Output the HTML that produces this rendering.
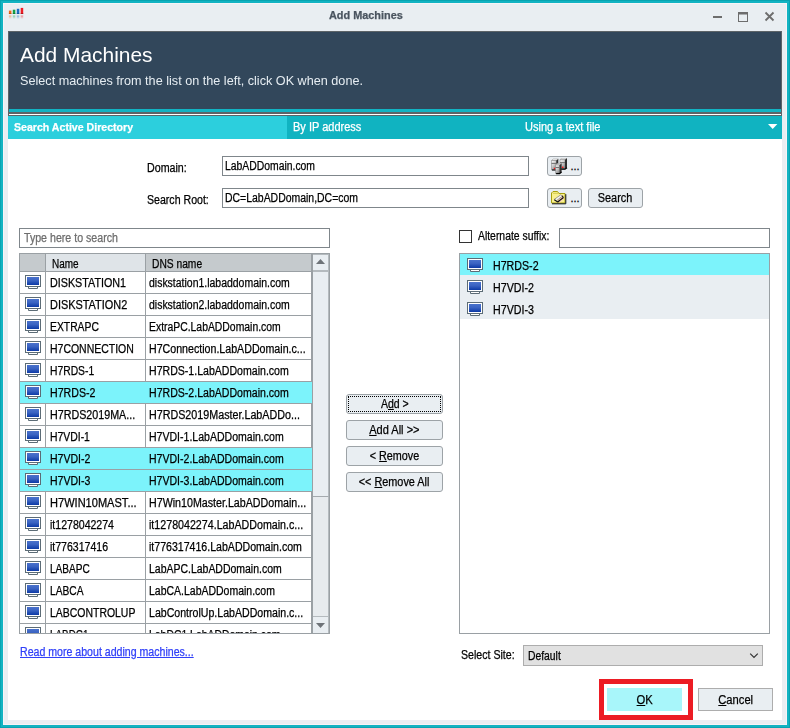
<!DOCTYPE html>
<html><head><meta charset="utf-8"><title>Add Machines</title>
<style>
*{box-sizing:border-box;margin:0;padding:0}
html,body{width:790px;height:728px;overflow:hidden;background:#e9eef2}
body{font-family:"Liberation Sans",Arial,sans-serif;font-size:11px;color:#000;position:relative;-webkit-text-stroke:0.250px}
.abs{position:absolute}
#frame{position:absolute;left:0;top:0;width:790px;height:728px;border:3px solid #12b3c2;background:#e9eef2;box-shadow:inset 0 0 0 1px #f6f4f7;outline:1px solid #07a4b1;outline-offset:-1px}
#titletxt{position:absolute;left:329px;top:9px;white-space:nowrap;color:#4a545f}
#dark{position:absolute;left:8px;top:31px;width:774px;height:78px;background:#32475b;border-left:1px solid #5d6468;border-top:1px solid #5d6468;border-right:1px solid #5d6468}
#h1{-webkit-text-stroke:0;position:absolute;left:20px;top:43px;color:#fff;white-space:nowrap}
#h2{-webkit-text-stroke:0;position:absolute;left:20px;top:73px;color:#e6edf2;white-space:nowrap}
#stripe{position:absolute;left:8px;top:109px;width:774px;height:3px;background:#12b3c3;border-left:1px solid #5d6468;border-right:1px solid #5d6468}
#sep{position:absolute;left:8px;top:112px;width:774px;height:4px;background:#fff;border:1px solid #5d6468;border-top-width:2px}
#tabs{position:absolute;left:8px;top:116px;width:774px;height:23px;background:#10b3c1}
#tab1{position:absolute;left:0;top:0;width:278.600px;height:23px;background:#2ccfdd}
.tabtxt{position:absolute;top:4px;color:#fff;font-size:12px;white-space:nowrap}
#body{position:absolute;left:8px;top:139px;width:774px;height:581px;background:#fff}
.lbl{position:absolute;white-space:nowrap}
.inp{position:absolute;border:1px solid #7f868b;background:#fff;height:20px;padding:2px 0 0 2.400px;white-space:nowrap;overflow:hidden}
.btn{position:absolute;border:1px solid #9da3a7;border-radius:3px;background:#e9eef2;text-align:center;white-space:nowrap}
.sbtn{position:absolute;border:1px solid #adadad;background:#e9eef2;text-align:center;white-space:nowrap}
u{text-decoration:underline}
#grid{position:absolute;left:19px;top:253px;width:311px;height:381px;border:1px solid #9aa0a4;background:#fff;overflow:hidden}
.hdr{position:absolute;top:0;height:18px;border-right:1px solid #9aa0a4;border-bottom:1px solid #9aa0a4;padding:3px 0 0 6px;white-space:nowrap;background:#c5cacd}
.row{position:absolute;left:0;width:292px;height:22px;border-bottom:1px solid #9aa0a4;background:#fff}
.row.sel{background:#7cf3fb}
.row div{position:absolute;top:0;height:21px;white-space:nowrap;overflow:hidden;padding-top:4px}
.c0{left:0;width:26px;border-right:1px solid #9aa0a4}
.c1{left:26px;width:100px;border-right:1px solid #9aa0a4;padding-left:3.6px}
.c2{left:126px;width:166px;border-right:1px solid #9aa0a4;padding-left:3.1px}
.row.sel div{border-right-color:#7cf3fb}
.mon{position:absolute;left:5px;top:3px;display:block}
#sb{position:absolute;left:292px;top:0;width:17px;height:379px;background:#e7ebee;border-left:1px solid #9aa0a4}
#list{position:absolute;left:459px;top:253px;width:311px;height:381px;border:1px solid #9aa0a4;background:#fff;overflow:hidden}
.li{position:absolute;left:0;width:309px;height:22px;background:#e9eef2;white-space:nowrap}
.li span{position:absolute;left:33px;top:6px}
.li .mon{left:7px;top:5px}
</style></head><body>
<svg width="0" height="0" style="position:absolute"><defs><linearGradient id="mg" x1="0" y1="0" x2="0" y2="1"><stop offset="0" stop-color="#4a72cc"/><stop offset="0.450" stop-color="#3a63c2"/><stop offset="1" stop-color="#0d3aa6"/></linearGradient></defs></svg>
<div id="frame"></div>
<svg class="abs" style="left:0;top:0" width="32" height="24" viewBox="0 0 32 24"><defs><linearGradient id="rf" x1="0" y1="0" x2="0" y2="1"><stop offset="0" stop-color="#fff" stop-opacity="0.500"/><stop offset="1" stop-color="#fff" stop-opacity="0"/></linearGradient><mask id="rm"><rect x="8" y="15.300" width="16" height="3.700" fill="url(#rf)"/></mask></defs><rect x="8.9" y="10.6" width="2.500" height="3.3" fill="#f2651a"/><rect x="8.9" y="13.100" width="2.500" height="0.800" fill="#b84a08"/><rect x="12.8" y="9.7" width="2.500" height="4.2" fill="#16a046"/><rect x="12.8" y="13.100" width="2.500" height="0.800" fill="#0a7a2c"/><rect x="16.8" y="8.8" width="2.500" height="5.1" fill="#1c6fc4"/><rect x="16.8" y="13.100" width="2.500" height="0.800" fill="#0c4f96"/><rect x="20.7" y="7.9" width="2.500" height="6.0" fill="#ec1c24"/><rect x="20.7" y="13.100" width="2.500" height="0.800" fill="#a80a12"/><g mask="url(#rm)"><rect x="8.9" y="15.300" width="2.500" height="3.700" fill="#f2651a"/><rect x="12.8" y="15.300" width="2.500" height="3.700" fill="#16a046"/><rect x="16.8" y="15.300" width="2.500" height="3.700" fill="#1c6fc4"/><rect x="20.7" y="15.300" width="2.500" height="3.700" fill="#ec1c24"/></g></svg>
<div id="titletxt"><span style="display:inline-block;transform:scaleX(1.0367);transform-origin:0 50%;font-size:10.5px;font-weight:bold">Add Machines</span></div>
<svg class="abs" style="left:708px;top:8px" width="72" height="18" viewBox="0 0 72 18">
<rect x="5" y="8" width="9" height="2" fill="#6d6d6d"/>
<rect x="30.500" y="5.500" width="9" height="8" fill="none" stroke="#6d6d6d"/><rect x="30" y="4" width="10" height="2.500" fill="#6d6d6d"/>
<path d="M57.500 4.500l8 8M65.500 4.500l-8 8" stroke="#6d6d6d" stroke-width="1.800" fill="none"/>
</svg>
<div id="dark"></div>
<div id="h1"><span style="display:inline-block;transform:scaleX(0.9957);transform-origin:0 50%;font-size:21px">Add Machines</span></div>
<div id="h2"><span style="display:inline-block;transform:scaleX(0.9727);transform-origin:0 50%;font-size:13px">Select machines from the list on the left, click OK when done.</span></div>
<div id="stripe"></div><div id="sep"></div>
<div id="tabs"><div id="tab1"></div>
<div class="tabtxt" style="left:5.500px"><span style="display:inline-block;transform:scaleX(0.9208);transform-origin:0 50%;font-size:11.5px;font-weight:bold">Search Active Directory</span></div>
<div class="tabtxt" style="left:285px"><span style="display:inline-block;transform:scaleX(0.9170);transform-origin:0 50%;font-size:12px">By IP address</span></div>
<div class="tabtxt" style="left:516.600px"><span style="display:inline-block;transform:scaleX(0.9202);transform-origin:0 50%;font-size:12px">Using a text file</span></div>
<svg class="abs" style="left:760px;top:8px" width="10" height="5" viewBox="0 0 10 5"><path d="M0 0h9.400l-4.700 5z" fill="#fff"/></svg>
</div>
<div id="body"></div>

<div class="lbl" style="left:146.500px;top:161px"><span style="display:inline-block;transform:scaleX(0.8884);transform-origin:0 50%;font-size:12px">Domain:</span></div>
<div class="inp" style="left:222px;top:156px;width:307px"><span style="display:inline-block;transform:scaleX(0.8650);transform-origin:0 50%;font-size:12px">LabADDomain.com</span></div>
<div class="btn" style="left:547px;top:156px;width:35px;height:20px"><span class="abs" style="left:22.500px;top:3px;font-size:11px">...</span>
<svg class="abs" style="left:3px;top:1px" width="17" height="17" viewBox="0 0 17 17"><defs><linearGradient id="sg" x1="0" y1="0" x2="0.600" y2="1"><stop offset="0" stop-color="#ffffff"/><stop offset="0.500" stop-color="#d0d0d0"/><stop offset="1" stop-color="#8c8c8c"/></linearGradient></defs><path d="M0.5 2.5L2.0 1H7.3L5.3 2.5z" fill="#fafafa" stroke="#8c8c8c" stroke-width="0.500"/><path d="M0.5 2.5H5.3V12H0.5z" fill="url(#sg)" stroke="#7a7a7a" stroke-width="0.500"/><path d="M5.3 2.5L7.3 1V10.5L5.3 12z" fill="#2e2e2e"/><path d="M0.5 5.4H5.3" stroke="#6f6f6f" stroke-width="1"/><path d="M1.0 12H5.3L7.3 10.5" stroke="#000" stroke-width="1.200" fill="none"/><path d="M9 1.7L10.5 0.2H16L14.0 1.7z" fill="#fafafa" stroke="#8c8c8c" stroke-width="0.500"/><path d="M9 1.7H14.0V11.2H9z" fill="url(#sg)" stroke="#7a7a7a" stroke-width="0.500"/><path d="M14.0 1.7L16 0.2V9.7L14.0 11.2z" fill="#2e2e2e"/><path d="M9 4.6000000000000005H14.0" stroke="#6f6f6f" stroke-width="1"/><path d="M9.5 11.2H14.0L16 9.7" stroke="#000" stroke-width="1.200" fill="none"/><rect x="2.900" y="9.800" width="1.400" height="1.400" fill="#ff1010"/><rect x="11" y="8.600" width="1.400" height="1.400" fill="#ff1010"/><path d="M4.6 6.9L6.1 5.4H10.6L8.6 6.9z" fill="#fafafa" stroke="#8c8c8c" stroke-width="0.500"/><path d="M4.6 6.9H8.6V15.6H4.6z" fill="url(#sg)" stroke="#7a7a7a" stroke-width="0.500"/><path d="M8.6 6.9L10.6 5.4V14.1L8.6 15.6z" fill="#2e2e2e"/><path d="M4.6 9.48H8.6" stroke="#6f6f6f" stroke-width="1"/><path d="M5.1 15.6H8.6L10.6 14.1" stroke="#000" stroke-width="1.200" fill="none"/></svg></div>
<div class="lbl" style="left:146.500px;top:193px"><span style="display:inline-block;transform:scaleX(0.8823);transform-origin:0 50%;font-size:12px">Search Root:</span></div>
<div class="inp" style="left:222px;top:188px;width:307px"><span style="display:inline-block;transform:scaleX(0.8708);transform-origin:0 50%;font-size:12px">DC=LabADDomain,DC=com</span></div>
<div class="btn" style="left:547px;top:188px;width:35px;height:20px"><span class="abs" style="left:22.500px;top:3px;font-size:11px">...</span>
<svg class="abs" style="left:3px;top:2px" width="17" height="15" viewBox="0 0 17 15"><path d="M0.500 12V2l1.500-1.500h4.500L8 2.500H14V12z" fill="#f9f08f" stroke="#a6a010"/><path d="M2 2.300H7.500" stroke="#c9c23a" stroke-width="0.800"/><path d="M1 12.800H14.800V3.200" stroke="#111" stroke-width="1" fill="none"/><path d="M9.500 4.200l2.300 0.300 1.200 3-4 4-2.500-1z" fill="#f8cdb4"/><path d="M3.500 8.200L9.800 3.800l1.500 1.400L5.300 9.800z" fill="#f4f4f4" stroke="#666" stroke-width="0.600"/><path d="M3.300 8.800l3.200 2.200 1.700-0.600M6.500 11L12.200 6.800l-0.800-2" stroke="#111" stroke-width="1.100" fill="none"/></svg></div>
<div class="btn" style="left:588px;top:188px;width:55px;height:20px;padding-top:2px"><span style="display:inline-block;transform:scaleX(0.9045);transform-origin:50% 50%;font-size:12px">Search</span></div>

<div class="inp" style="left:19px;top:228px;width:311px;color:#6d6d6d;padding-left:4.200px"><span style="display:inline-block;transform:scaleX(0.8853);transform-origin:0 50%;font-size:12px">Type here to search</span></div>
<div id="grid">
<div class="hdr" style="left:0;width:26px"></div>
<div class="hdr" style="left:26px;width:100px;background:#dfe4e8"><span style="display:inline-block;transform:scaleX(0.8308);transform-origin:0 50%;font-size:12px">Name</span></div>
<div class="hdr" style="left:126px;width:166px"><span style="display:inline-block;transform:scaleX(0.8537);transform-origin:0 50%;font-size:12px">DNS name</span></div>
<div class="row" style="top:18px"><div class="c0"><svg class="mon" width="16" height="14" viewBox="0 0 16 14"><rect x="0.5" y="0.5" width="15" height="11" fill="#fff" stroke="#5c6c76"/><rect x="2" y="2" width="12" height="8" fill="url(#mg)"/><path d="M3.500 12v1.500h9V12" fill="#fff" stroke="#5c6c76"/></svg></div><div class="c1"><span style="display:inline-block;transform:scaleX(0.8963);transform-origin:0 50%;font-size:12px">DISKSTATION1</span></div><div class="c2"><span style="display:inline-block;transform:scaleX(0.8722);transform-origin:0 50%;font-size:12px">diskstation1.labaddomain.com</span></div></div>
<div class="row" style="top:40px"><div class="c0"><svg class="mon" width="16" height="14" viewBox="0 0 16 14"><rect x="0.5" y="0.5" width="15" height="11" fill="#fff" stroke="#5c6c76"/><rect x="2" y="2" width="12" height="8" fill="url(#mg)"/><path d="M3.500 12v1.500h9V12" fill="#fff" stroke="#5c6c76"/></svg></div><div class="c1"><span style="display:inline-block;transform:scaleX(0.9092);transform-origin:0 50%;font-size:12px">DISKSTATION2</span></div><div class="c2"><span style="display:inline-block;transform:scaleX(0.8722);transform-origin:0 50%;font-size:12px">diskstation2.labaddomain.com</span></div></div>
<div class="row" style="top:62px"><div class="c0"><svg class="mon" width="16" height="14" viewBox="0 0 16 14"><rect x="0.5" y="0.5" width="15" height="11" fill="#fff" stroke="#5c6c76"/><rect x="2" y="2" width="12" height="8" fill="url(#mg)"/><path d="M3.500 12v1.500h9V12" fill="#fff" stroke="#5c6c76"/></svg></div><div class="c1"><span style="display:inline-block;transform:scaleX(0.8626);transform-origin:0 50%;font-size:12px">EXTRAPC</span></div><div class="c2"><span style="display:inline-block;transform:scaleX(0.8661);transform-origin:0 50%;font-size:12px">ExtraPC.LabADDomain.com</span></div></div>
<div class="row" style="top:84px"><div class="c0"><svg class="mon" width="16" height="14" viewBox="0 0 16 14"><rect x="0.5" y="0.5" width="15" height="11" fill="#fff" stroke="#5c6c76"/><rect x="2" y="2" width="12" height="8" fill="url(#mg)"/><path d="M3.500 12v1.500h9V12" fill="#fff" stroke="#5c6c76"/></svg></div><div class="c1"><span style="display:inline-block;transform:scaleX(0.8728);transform-origin:0 50%;font-size:12px">H7CONNECTION</span></div><div class="c2"><span style="display:inline-block;transform:scaleX(0.8865);transform-origin:0 50%;font-size:12px">H7Connection.LabADDomain.c...</span></div></div>
<div class="row" style="top:106px"><div class="c0"><svg class="mon" width="16" height="14" viewBox="0 0 16 14"><rect x="0.5" y="0.5" width="15" height="11" fill="#fff" stroke="#5c6c76"/><rect x="2" y="2" width="12" height="8" fill="url(#mg)"/><path d="M3.500 12v1.500h9V12" fill="#fff" stroke="#5c6c76"/></svg></div><div class="c1"><span style="display:inline-block;transform:scaleX(0.8606);transform-origin:0 50%;font-size:12px">H7RDS-1</span></div><div class="c2"><span style="display:inline-block;transform:scaleX(0.8807);transform-origin:0 50%;font-size:12px">H7RDS-1.LabADDomain.com</span></div></div>
<div class="row sel" style="top:128px"><div class="c0"><svg class="mon" width="16" height="14" viewBox="0 0 16 14"><rect x="0.5" y="0.5" width="15" height="11" fill="#fff" stroke="#5c6c76"/><rect x="2" y="2" width="12" height="8" fill="url(#mg)"/><path d="M3.500 12v1.500h9V12" fill="#fff" stroke="#5c6c76"/></svg></div><div class="c1"><span style="display:inline-block;transform:scaleX(0.8840);transform-origin:0 50%;font-size:12px">H7RDS-2</span></div><div class="c2"><span style="display:inline-block;transform:scaleX(0.8807);transform-origin:0 50%;font-size:12px">H7RDS-2.LabADDomain.com</span></div></div>
<div class="row" style="top:150px"><div class="c0"><svg class="mon" width="16" height="14" viewBox="0 0 16 14"><rect x="0.5" y="0.5" width="15" height="11" fill="#fff" stroke="#5c6c76"/><rect x="2" y="2" width="12" height="8" fill="url(#mg)"/><path d="M3.500 12v1.500h9V12" fill="#fff" stroke="#5c6c76"/></svg></div><div class="c1"><span style="display:inline-block;transform:scaleX(0.8933);transform-origin:0 50%;font-size:12px">H7RDS2019MA...</span></div><div class="c2"><span style="display:inline-block;transform:scaleX(0.8942);transform-origin:0 50%;font-size:12px">H7RDS2019Master.LabADDo...</span></div></div>
<div class="row" style="top:172px"><div class="c0"><svg class="mon" width="16" height="14" viewBox="0 0 16 14"><rect x="0.5" y="0.5" width="15" height="11" fill="#fff" stroke="#5c6c76"/><rect x="2" y="2" width="12" height="8" fill="url(#mg)"/><path d="M3.500 12v1.500h9V12" fill="#fff" stroke="#5c6c76"/></svg></div><div class="c1"><span style="display:inline-block;transform:scaleX(0.8671);transform-origin:0 50%;font-size:12px">H7VDI-1</span></div><div class="c2"><span style="display:inline-block;transform:scaleX(0.8781);transform-origin:0 50%;font-size:12px">H7VDI-1.LabADDomain.com</span></div></div>
<div class="row sel" style="top:194px"><div class="c0"><svg class="mon" width="16" height="14" viewBox="0 0 16 14"><rect x="0.5" y="0.5" width="15" height="11" fill="#fff" stroke="#5c6c76"/><rect x="2" y="2" width="12" height="8" fill="url(#mg)"/><path d="M3.500 12v1.500h9V12" fill="#fff" stroke="#5c6c76"/></svg></div><div class="c1"><span style="display:inline-block;transform:scaleX(0.8780);transform-origin:0 50%;font-size:12px">H7VDI-2</span></div><div class="c2"><span style="display:inline-block;transform:scaleX(0.8781);transform-origin:0 50%;font-size:12px">H7VDI-2.LabADDomain.com</span></div></div>
<div class="row sel" style="top:216px"><div class="c0"><svg class="mon" width="16" height="14" viewBox="0 0 16 14"><rect x="0.5" y="0.5" width="15" height="11" fill="#fff" stroke="#5c6c76"/><rect x="2" y="2" width="12" height="8" fill="url(#mg)"/><path d="M3.500 12v1.500h9V12" fill="#fff" stroke="#5c6c76"/></svg></div><div class="c1"><span style="display:inline-block;transform:scaleX(0.8780);transform-origin:0 50%;font-size:12px">H7VDI-3</span></div><div class="c2"><span style="display:inline-block;transform:scaleX(0.8781);transform-origin:0 50%;font-size:12px">H7VDI-3.LabADDomain.com</span></div></div>
<div class="row" style="top:238px"><div class="c0"><svg class="mon" width="16" height="14" viewBox="0 0 16 14"><rect x="0.5" y="0.5" width="15" height="11" fill="#fff" stroke="#5c6c76"/><rect x="2" y="2" width="12" height="8" fill="url(#mg)"/><path d="M3.500 12v1.500h9V12" fill="#fff" stroke="#5c6c76"/></svg></div><div class="c1"><span style="display:inline-block;transform:scaleX(0.9210);transform-origin:0 50%;font-size:12px">H7WIN10MAST...</span></div><div class="c2"><span style="display:inline-block;transform:scaleX(0.8894);transform-origin:0 50%;font-size:12px">H7Win10Master.LabADDomain...</span></div></div>
<div class="row" style="top:260px"><div class="c0"><svg class="mon" width="16" height="14" viewBox="0 0 16 14"><rect x="0.5" y="0.5" width="15" height="11" fill="#fff" stroke="#5c6c76"/><rect x="2" y="2" width="12" height="8" fill="url(#mg)"/><path d="M3.500 12v1.500h9V12" fill="#fff" stroke="#5c6c76"/></svg></div><div class="c1"><span style="display:inline-block;transform:scaleX(0.8797);transform-origin:0 50%;font-size:12px">it1278042274</span></div><div class="c2"><span style="display:inline-block;transform:scaleX(0.8890);transform-origin:0 50%;font-size:12px">it1278042274.LabADDomain.c...</span></div></div>
<div class="row" style="top:282px"><div class="c0"><svg class="mon" width="16" height="14" viewBox="0 0 16 14"><rect x="0.5" y="0.5" width="15" height="11" fill="#fff" stroke="#5c6c76"/><rect x="2" y="2" width="12" height="8" fill="url(#mg)"/><path d="M3.500 12v1.500h9V12" fill="#fff" stroke="#5c6c76"/></svg></div><div class="c1"><span style="display:inline-block;transform:scaleX(0.8777);transform-origin:0 50%;font-size:12px">it776317416</span></div><div class="c2"><span style="display:inline-block;transform:scaleX(0.8815);transform-origin:0 50%;font-size:12px">it776317416.LabADDomain.com</span></div></div>
<div class="row" style="top:304px"><div class="c0"><svg class="mon" width="16" height="14" viewBox="0 0 16 14"><rect x="0.5" y="0.5" width="15" height="11" fill="#fff" stroke="#5c6c76"/><rect x="2" y="2" width="12" height="8" fill="url(#mg)"/><path d="M3.500 12v1.500h9V12" fill="#fff" stroke="#5c6c76"/></svg></div><div class="c1"><span style="display:inline-block;transform:scaleX(0.8425);transform-origin:0 50%;font-size:12px">LABAPC</span></div><div class="c2"><span style="display:inline-block;transform:scaleX(0.8726);transform-origin:0 50%;font-size:12px">LabAPC.LabADDomain.com</span></div></div>
<div class="row" style="top:326px"><div class="c0"><svg class="mon" width="16" height="14" viewBox="0 0 16 14"><rect x="0.5" y="0.5" width="15" height="11" fill="#fff" stroke="#5c6c76"/><rect x="2" y="2" width="12" height="8" fill="url(#mg)"/><path d="M3.500 12v1.500h9V12" fill="#fff" stroke="#5c6c76"/></svg></div><div class="c1"><span style="display:inline-block;transform:scaleX(0.8511);transform-origin:0 50%;font-size:12px">LABCA</span></div><div class="c2"><span style="display:inline-block;transform:scaleX(0.8738);transform-origin:0 50%;font-size:12px">LabCA.LabADDomain.com</span></div></div>
<div class="row" style="top:348px"><div class="c0"><svg class="mon" width="16" height="14" viewBox="0 0 16 14"><rect x="0.5" y="0.5" width="15" height="11" fill="#fff" stroke="#5c6c76"/><rect x="2" y="2" width="12" height="8" fill="url(#mg)"/><path d="M3.500 12v1.500h9V12" fill="#fff" stroke="#5c6c76"/></svg></div><div class="c1"><span style="display:inline-block;transform:scaleX(0.8712);transform-origin:0 50%;font-size:12px">LABCONTROLUP</span></div><div class="c2"><span style="display:inline-block;transform:scaleX(0.8823);transform-origin:0 50%;font-size:12px">LabControlUp.LabADDomain.c...</span></div></div>
<div class="row" style="top:370px"><div class="c0"><svg class="mon" width="16" height="14" viewBox="0 0 16 14"><rect x="0.5" y="0.5" width="15" height="11" fill="#fff" stroke="#5c6c76"/><rect x="2" y="2" width="12" height="8" fill="url(#mg)"/><path d="M3.500 12v1.500h9V12" fill="#fff" stroke="#5c6c76"/></svg></div><div class="c1"><span style="display:inline-block;transform:scaleX(0.8225);transform-origin:0 50%;font-size:12px">LABDC1</span></div><div class="c2"><span style="display:inline-block;transform:scaleX(0.8679);transform-origin:0 50%;font-size:12px">LabDC1.LabADDomain.com</span></div></div>

<div id="sb">
<div class="abs" style="left:0;top:0;width:16px;height:17px;border-top:1px solid #b4babe;border-right:1px solid #b4babe;border-bottom:1px solid #b4babe;background:#e9eef2"></div>
<svg class="abs" style="left:3px;top:5px" width="9" height="5" viewBox="0 0 9 5"><path d="M0 5h9l-4.500-5z" fill="#6e7378"/></svg>
<div class="abs" style="left:0;top:17px;width:16px;height:226px;border-bottom:1px solid #a4aaae;border-top:1px solid #b4babe;border-right:1px solid #b4babe;background:#e9eef2"></div><div class="abs" style="left:0;top:243px;width:16px;height:119px;border-right:1px solid #b4babe"></div>
<div class="abs" style="left:0;top:362px;width:16px;height:17px;border-top:1px solid #b4babe;border-right:1px solid #b4babe;background:#e9eef2"></div>
<svg class="abs" style="left:3px;top:369px" width="9" height="5" viewBox="0 0 9 5"><path d="M0 0h9l-4.500 5z" fill="#6e7378"/></svg>
</div>
</div>
<div class="lbl" style="left:20px;top:645px;color:#3040f8;text-decoration:underline"><span style="display:inline-block;transform:scaleX(0.8826);transform-origin:0 50%;font-size:12px;text-decoration:underline">Read more about adding machines...</span></div>

<div class="btn" style="left:346px;top:394px;width:97px;height:20px;padding-top:2px"><span style="display:inline-block;transform:scaleX(0.8769);transform-origin:50% 50%;font-size:12px">A<u>d</u>d &gt;</span><div class="abs" style="left:1px;top:1px;width:93px;height:16px;border:1px dotted #000"></div></div>
<div class="btn" style="left:346px;top:420px;width:97px;height:20px;padding-top:2px"><span style="display:inline-block;transform:scaleX(0.9192);transform-origin:50% 50%;font-size:12px"><u>A</u>dd All &gt;&gt;</span></div>
<div class="btn" style="left:346px;top:446px;width:97px;height:20px;padding-top:2px"><span style="display:inline-block;transform:scaleX(0.8995);transform-origin:50% 50%;font-size:12px">&lt; <u>R</u>emove</span></div>
<div class="btn" style="left:346px;top:472px;width:97px;height:20px;padding-top:2px"><span style="display:inline-block;transform:scaleX(0.9059);transform-origin:50% 50%;font-size:12px">&lt;&lt; <u>R</u>emove All</span></div>

<div class="abs" style="left:459px;top:230px;width:13px;height:13px;border:1px solid #333;background:#fff"></div>
<div class="lbl" style="left:478px;top:229px"><span style="display:inline-block;transform:scaleX(0.8655);transform-origin:0 50%;font-size:12px">Alternate suffix:</span></div>
<div class="inp" style="left:559px;top:228px;width:211px"></div>
<div id="list">
<div class="li" style="top:-1px;background:#7cf3fb"><svg class="mon" width="16" height="14" viewBox="0 0 16 14"><rect x="0.5" y="0.5" width="15" height="11" fill="#fff" stroke="#5c6c76"/><rect x="2" y="2" width="12" height="8" fill="url(#mg)"/><path d="M3.500 12v1.500h9V12" fill="#fff" stroke="#5c6c76"/></svg><span style="display:inline-block;transform:scaleX(0.8879);transform-origin:0 50%;font-size:12px">H7RDS-2</span></div>
<div class="li" style="top:21px"><svg class="mon" width="16" height="14" viewBox="0 0 16 14"><rect x="0.5" y="0.5" width="15" height="11" fill="#fff" stroke="#5c6c76"/><rect x="2" y="2" width="12" height="8" fill="url(#mg)"/><path d="M3.500 12v1.500h9V12" fill="#fff" stroke="#5c6c76"/></svg><span style="display:inline-block;transform:scaleX(0.8910);transform-origin:0 50%;font-size:12px">H7VDI-2</span></div>
<div class="li" style="top:43px"><svg class="mon" width="16" height="14" viewBox="0 0 16 14"><rect x="0.5" y="0.5" width="15" height="11" fill="#fff" stroke="#5c6c76"/><rect x="2" y="2" width="12" height="8" fill="url(#mg)"/><path d="M3.500 12v1.500h9V12" fill="#fff" stroke="#5c6c76"/></svg><span style="display:inline-block;transform:scaleX(0.8910);transform-origin:0 50%;font-size:12px">H7VDI-3</span></div>
</div>
<div class="lbl" style="left:461px;top:648px"><span style="display:inline-block;transform:scaleX(0.8830);transform-origin:0 50%;font-size:12px">Select Site:</span></div>
<div class="abs" style="left:523px;top:645px;width:240px;height:21px;border:1px solid #adadad;background:#e1e1e1"><span class="abs" style="left:3.500px;top:3px"><span style="display:inline-block;transform:scaleX(0.8624);transform-origin:0 50%;font-size:12px">Default</span></span>
<svg class="abs" style="left:224px;top:7px" width="12" height="6" viewBox="0 0 12 6"><path d="M2.200 0.600l3.800 3.800 3.800-3.800" stroke="#333" stroke-width="1.200" fill="none"/></svg></div>
<div class="abs" style="left:599px;top:679px;width:94px;height:41px;border:5px solid #ec1c24;background:#fff"></div>
<div class="sbtn" style="left:607px;top:688px;width:75px;height:23px;background:#a8f6fa;border-color:#a8f6fa;padding-top:4px"><span style="display:inline-block;transform:scaleX(0.9341);transform-origin:50% 50%;font-size:12px"><u>O</u>K</span></div>
<div class="sbtn" style="left:698px;top:688px;width:75px;height:23px;padding-top:4px"><span style="display:inline-block;transform:scaleX(0.9315);transform-origin:50% 50%;font-size:12px"><u>C</u>ancel</span></div>
</body></html>
